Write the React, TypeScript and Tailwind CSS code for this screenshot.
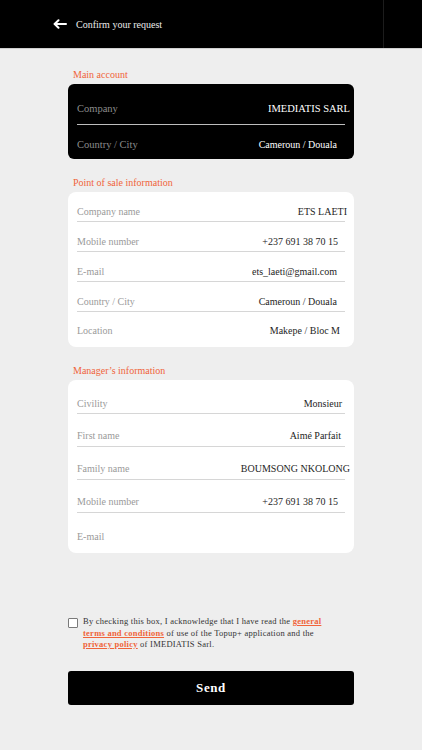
import React from 'react';

const serif = { fontFamily: '"Liberation Serif", "Times New Roman", serif' };

type Row = { label: string; value?: string; pr?: string };

const mainAccount: Row[] = [
    { label: 'Company', value: 'IMEDIATIS SARL', pr: 'mr-[-5px]' },
    { label: 'Country / City', value: 'Cameroun / Douala', pr: 'mr-[8px]' },
];

const pointOfSale: Row[] = [
    { label: 'Company name', value: 'ETS LAETI', pr: 'mr-[-2px]' },
    { label: 'Mobile number', value: '+237 691 38 70 15', pr: 'mr-[7px]' },
    { label: 'E-mail', value: 'ets_laeti@gmail.com', pr: 'mr-[8px]' },
    { label: 'Country / City', value: 'Cameroun / Douala', pr: 'mr-[8px]' },
    { label: 'Location', value: 'Makepe / Bloc M', pr: 'mr-[5px]' },
];

const manager: Row[] = [
    { label: 'Civility', value: 'Monsieur', pr: 'mr-[3px]' },
    { label: 'First name', value: 'Aimé Parfait', pr: 'mr-[4px]' },
    { label: 'Family name', value: 'BOUMSONG NKOLONG', pr: 'mr-[-5px]' },
    { label: 'Mobile number', value: '+237 691 38 70 15', pr: 'mr-[7px]' },
    { label: 'E-mail' },
];

const SectionLabel = ({ text }: { text: string }) => (
    <div className="h-[18px] mb-[1px] pl-[5px] flex items-center text-[10px] text-[#f0643a]">{text}</div>
);

const BackArrow = () => (
    <svg width="14" height="10" viewBox="0 0 14 10" fill="none" stroke="white" strokeWidth="2" strokeLinecap="round" strokeLinejoin="round">
        <path d="M13 5H1.8" />
        <path d="M5.5 1.2 1.6 5l3.9 3.8" />
    </svg>
);

// row classes for the white cards
const posRow = (i: number, last: boolean) => {
    if (last) return 'h-[35px] pt-[2px] flex items-center justify-between';
    return 'h-[30px] pb-[2px] flex items-end justify-between border-b border-[#d6d6d6]';
};

const managerRow = (i: number, last: boolean) => {
    if (last) return 'h-[40px] pt-[8px] flex items-center justify-between';
    if (i === 0) return 'h-[34px] pb-[2px] flex items-end justify-between border-b border-[#d6d6d6]';
    return 'h-[33px] pb-[3px] flex items-end justify-between border-b border-[#d6d6d6]';
};

const App = () => {
    return (
        <div className="w-[422px] min-h-[750px] bg-[#eeeeee]" style={serif}>
            {/* header */}
            <div className="relative h-[48px] bg-black flex items-center border-b border-[#cfcfcf] box-content">
                <div className="ml-[53px] flex items-center">
                    <BackArrow />
                </div>
                <span className="ml-[9px] text-[10px] text-[#ececec]">Confirm your request</span>
                <div className="absolute left-[383px] top-0 h-full w-px bg-[#1c1c1c]" />
            </div>

            <div className="pt-[16px] ml-[68px] w-[286px]">
                {/* main account */}
                <SectionLabel text="Main account" />
                <div className="bg-black rounded-[6px] px-[9px] pt-[8px]">
                    <div className="h-[33px] pt-[2px] flex items-center justify-between border-b border-[#bdbdbd]">
                        <span className="text-[10.5px] text-[#8c8c8c]">{mainAccount[0].label}</span>
                        <span className={`text-[10.5px] text-white ${mainAccount[0].pr}`}>{mainAccount[0].value}</span>
                    </div>
                    <div className="h-[34px] pt-[5px] flex items-center justify-between">
                        <span className="text-[10.5px] text-[#8c8c8c]">{mainAccount[1].label}</span>
                        <span className={`text-[10px] text-white ${mainAccount[1].pr}`}>{mainAccount[1].value}</span>
                    </div>
                </div>

                {/* point of sale */}
                <div className="mt-[14px]">
                    <SectionLabel text="Point of sale information" />
                    <div className="bg-white rounded-[8px] px-[9px]">
                        {pointOfSale.map((row, i) => (
                            <div key={row.label} className={posRow(i, i === pointOfSale.length - 1)}>
                                <span className="text-[10px] leading-[14px] text-[#9a9a9a]">{row.label}</span>
                                <span className={`text-[10px] leading-[14px] text-[#1e1e1e] ${row.pr}`}>{row.value}</span>
                            </div>
                        ))}
                    </div>
                </div>

                {/* manager */}
                <div className="mt-[14px]">
                    <SectionLabel text="Manager’s information" />
                    <div className="bg-white rounded-[8px] px-[9px]">
                        {manager.map((row, i) => (
                            <div key={row.label} className={managerRow(i, i === manager.length - 1)}>
                                <span className="text-[10px] leading-[14px] text-[#9a9a9a]">{row.label}</span>
                                {row.value && (
                                    <span className={`text-[10px] leading-[14px] text-[#1e1e1e] ${row.pr}`}>{row.value}</span>
                                )}
                            </div>
                        ))}
                    </div>
                </div>

                {/* terms */}
                <div className="mt-[63px] flex items-start gap-[5px]">
                    <div className="mt-[2px] w-[10px] h-[10px] shrink-0 border border-[#7a7a7a] rounded-[1px] bg-white" />
                    <p className="w-[244px] text-[8.5px] leading-[11.5px] tracking-[0.25px] text-[#333]">
                        By checking this box, I acknowledge that I have read the{' '}
                        <a href="#" className="font-bold text-[#f0643a] underline">general terms and conditions</a> of use of the Topup+
                        application and the <a href="#" className="font-bold text-[#f0643a] underline">privacy policy</a> of IMEDIATIS Sarl.
                    </p>
                </div>

                <button
                    type="button"
                    className="mt-[20px] w-full h-[34px] bg-black rounded-[3px] text-white font-bold text-[13px] tracking-[0.6px]"
                    style={serif}
                >
                    Send
                </button>
            </div>
        </div>
    );
};

export default App;
